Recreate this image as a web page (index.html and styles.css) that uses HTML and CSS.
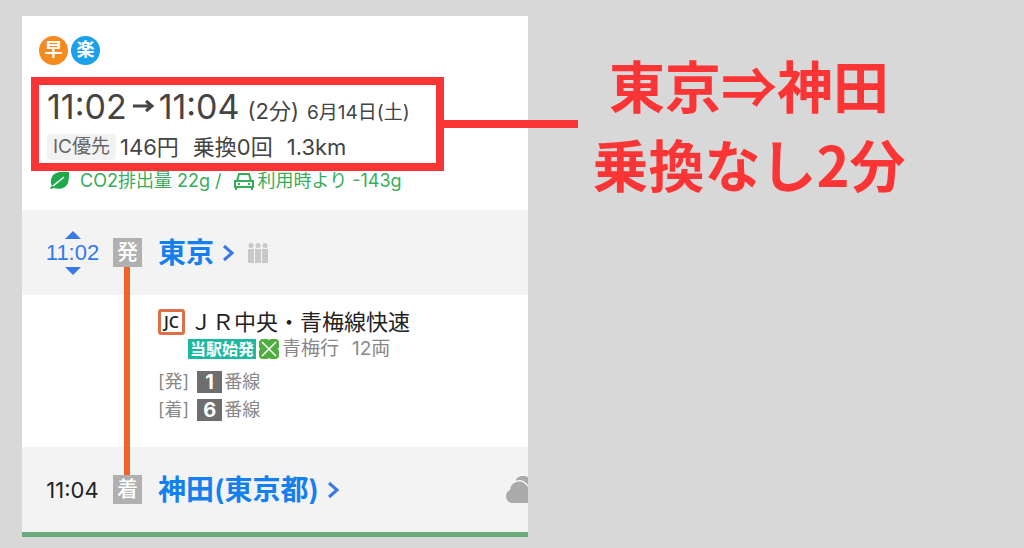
FILE: index.html
```html
<!DOCTYPE html>
<html lang="ja">
<head>
    <meta charset="UTF-8">
    <meta name="viewport" content="width=device-width, initial-scale=1.0">
    <title>東京⇒神田 乗換なし2分</title>
    <link rel="stylesheet" href="styles.css">
</head>
<body>
    <div class="page">
        <main class="route">
            <div class="route-header">
                <div class="badges">
                    <span class="badge badge-fast">早</span>
                    <span class="badge badge-easy">楽</span>
                </div>
                <div class="summary">
                    <div class="summary-time">
                        <span class="time-range">11:02<svg class="arrow" viewBox="0 0 22 16"><path d="M1 8h18M14 3l6 5-6 5"/></svg>11:04</span>
                        <span class="duration">(2分)</span>
                        <span class="date">6月14日(土)</span>
                    </div>
                    <div class="summary-fare">
                        <span class="ic-label">IC優先</span>
                        <span class="fare">146円</span>
                        <span>乗換0回</span>
                        <span>1.3km</span>
                    </div>
                </div>
                <div class="co2">
                    <svg class="leaf" viewBox="0 0 20 18"><path d="M19 0C11-1 4 0 2 5c-2 4-1 7 0 9l-2 2 1 1 3-1c6 2 12 0 14-5 1-3 1-7 1-11z" fill="#21a84c"/><path d="M3 14L14 5" stroke="#fff" stroke-width="1.5"/></svg>
                    <span class="co2-text">CO2排出量 22g /
                        <svg class="car" viewBox="0 0 22 18"><path d="M2 9h18v6H2zM4 9l2-7h10l2 7M3 15v3M19 15v3"/><path d="M5 12h2M15 12h2"/></svg>利用時より -143g</span>
                </div>
            </div>

            <div class="station">
                <div class="station-time station-time-link">
                    <span class="tri-up"></span>
                    <span>11:02</span>
                    <span class="tri-down"></span>
                </div>
                <span class="mark">発</span>
                <a class="station-name" href="#">東京<svg class="chevron" viewBox="0 0 12 18"><path d="M2 2l8 7-8 7"/></svg></a>
                <svg class="people" viewBox="0 0 20 20">
                    <circle cx="3" cy="2.5" r="2.5"/><circle cx="10" cy="2.5" r="2.5"/><circle cx="17" cy="2.5" r="2.5"/>
                    <path d="M0 6h6v14H0zM7 6h6v14H7zM14 6h6v14h-6z"/>
                </svg>
            </div>

            <div class="leg">
                <div class="line-name">
                    <span class="line-code">JC</span>
                    <span>ＪＲ中央・青梅線快速</span>
                </div>
                <div class="train">
                    <span class="start-tag">当駅始発</span>
                    <svg class="seat" viewBox="0 0 20 20"><path d="M4 0q3-1 6 1 3-2 6-1 4 0 4 4 1 3-1 6 2 3 1 6 0 4-4 4-3 1-6-1-3 2-6 1-4 0-4-4-1-3 1-6-2-3-1-6 0-4 4-4z" fill="#4fae3f"/><path d="M3 3l14 14M17 3L3 17" stroke="#fff" stroke-width="1.5"/></svg>
                    <span class="bound">青梅行</span>
                    <span>12両</span>
                </div>
                <div class="platform"><span>[発]</span><span class="number">1</span><span>番線</span></div>
                <div class="platform"><span>[着]</span><span class="number">6</span><span>番線</span></div>
            </div>

            <div class="station">
                <div class="station-time">11:04</div>
                <span class="mark">着</span>
                <a class="station-name" href="#">神田(東京都)<svg class="chevron" viewBox="0 0 12 18"><path d="M2 2l8 7-8 7"/></svg></a>
                <svg class="cloud" viewBox="0 0 36 28"><path d="M11 7a8 8 0 0 1 15-3c5 0 8 4 8 9l-8 2z"/><path class="cloud-front" d="M7 27a7 7 0 0 1-1-13 9 9 0 0 1 16-5c2 1 2 3 3 4 5-1 8 2 8 7s-3 7-6 7z"/></svg>
            </div>
        </main>

        <h1 class="callout">東京⇒神田<br>乗換なし2分</h1>
    </div>
</body>
</html>
```
FILE: styles.css
```css
body {
    background-color: #d8d8d8;
    color: #444;
    font-family: Inter, "Noto Sans CJK JP", sans-serif;
    margin: 0;
}
.page {
    display: grid;
    grid-template-columns: 506fr 474fr;
    align-items: start;
    padding: 16px 22px 0;
}
.route {
    background-color: #fff;
    border-bottom: 5px solid #6dab7d;
}
.route-header {
    padding: 20px 9px 18px;
}
.badges {
    display: flex;
    gap: 3px;
    padding-left: 8px;
}
.badge {
    width: 29px;
    height: 29px;
    border-radius: 50%;
    color: #fff;
    font-size: 18px;
    font-weight: 700;
    line-height: 28px;
    text-align: center;
}
.badge-fast {
    background-color: #f58a1f;
}
.badge-easy {
    background-color: #1ba1ec;
}

/* highlighted summary with the line that leads to the callout */
.summary {
    position: relative;
    margin: 12px 75px 0 0;
    border: 8px solid #f93434;
}
.summary::after {
    content: "";
    position: absolute;
    left: 100%;
    top: 35px;
    width: 142px;
    height: 8px;
    background-color: #f93434;
}
.summary-time {
    display: flex;
    align-items: baseline;
    gap: 8px;
    height: 46px;
    padding-left: 8px;
    line-height: 44px;
    white-space: nowrap;
}
.time-range {
    font-size: 34px;
}
.arrow {
    width: 22px;
    height: 16px;
    margin: 0 5px;
    fill: none;
    stroke: #444;
    stroke-width: 3;
    vertical-align: 5px;
}
.duration {
    font-size: 22px;
}
.date {
    font-size: 19px;
}
.summary-fare {
    display: flex;
    align-items: center;
    gap: 14px;
    height: 32px;
    padding-left: 8px;
    font-size: 22px;
    line-height: 28px;
    white-space: nowrap;
}
.ic-label {
    padding: 0 6px;
    border-radius: 4px;
    background-color: #f2f2f2;
    color: #666;
    font-size: 19px;
    line-height: 26px;
}
.fare {
    margin-left: -10px;
}
.co2 {
    display: flex;
    align-items: center;
    gap: 10px;
    height: 22px;
    margin-top: -1px;
    padding-left: 19px;
    color: #35ad5a;
    font-size: 18px;
    line-height: 22px;
    white-space: nowrap;
}
.leaf {
    width: 20px;
    height: 18px;
}
.car {
    width: 22px;
    height: 18px;
    margin: 0 3px 0 6px;
    fill: none;
    stroke: #35ad5a;
    stroke-width: 2;
    vertical-align: -3px;
}

.station {
    display: flex;
    align-items: center;
    height: 85px;
    padding-left: 22px;
    background-color: #f3f3f3;
    overflow: hidden;
}
.station-time {
    display: flex;
    flex-direction: column;
    align-items: center;
    width: 57px;
    margin-right: 12px;
    color: #222;
    font-size: 22px;
    line-height: 28px;
}
.station-time-link {
    color: #2f7be8;
    font-family: "Liberation Sans", sans-serif;
}
.tri-up, .tri-down {
    border-left: 8px solid transparent;
    border-right: 8px solid transparent;
}
.tri-up {
    border-bottom: 8px solid #3b78e7;
}
.tri-down {
    border-top: 8px solid #3b78e7;
}
.mark {
    width: 29px;
    height: 29px;
    background-color: #b0b0b0;
    color: #fff;
    font-size: 21px;
    font-weight: 500;
    line-height: 28px;
    text-align: center;
}
.station-name {
    display: flex;
    align-items: center;
    gap: 8px;
    margin-left: 16px;
    color: #147fee;
    font-size: 28px;
    font-weight: 600;
    line-height: 40px;
    text-decoration: none;
    white-space: nowrap;
}
.chevron {
    width: 12px;
    height: 18px;
    fill: none;
    stroke: #3b78e7;
    stroke-width: 3;
}
.people {
    width: 20px;
    height: 20px;
    margin-left: 14px;
    fill: #c8c8c8;
}
.cloud {
    flex: none;
    width: 36px;
    height: 28px;
    margin: 0 -12px 0 auto;
    fill: #ababab;
}
.cloud-front {
    stroke: #f3f3f3;
    stroke-width: 3;
    paint-order: stroke;
}

.leg {
    position: relative;
    height: 139px;
    padding: 13px 0 0 136px;
    color: #888;
    font-size: 18px;
    white-space: nowrap;
}
/* line between the two station marks */
.leg::before {
    content: "";
    position: absolute;
    left: 102px;
    top: -28px;
    bottom: -28px;
    width: 6px;
    background-color: #f2622c;
}
.line-name {
    display: flex;
    align-items: center;
    gap: 5px;
    color: #222;
    font-size: 22px;
    line-height: 28px;
}
.line-code {
    width: 21px;
    border: 3px solid #dc7148;
    border-radius: 3px;
    font-family: "Open Sans", sans-serif;
    font-size: 16px;
    font-weight: 600;
    line-height: 20px;
    text-align: center;
}
.train {
    display: flex;
    align-items: center;
    gap: 3px;
    height: 26px;
    padding-left: 30px;
    font-size: 19px;
    line-height: 26px;
}
.start-tag {
    padding: 0 2px;
    background-color: #1cb9a0;
    color: #fff;
    font-size: 16px;
    font-weight: 700;
    line-height: 20px;
}
.seat {
    width: 20px;
    height: 20px;
}
.bound {
    margin-right: 10px;
}
.platform {
    display: flex;
    align-items: center;
    height: 28px;
    line-height: 28px;
}
.train + .platform {
    margin-top: 6px;
}
.number {
    width: 25px;
    margin: 0 2px 0 8px;
    background-color: #6e6e6e;
    color: #fff;
    font-size: 20px;
    font-weight: 700;
    line-height: 22px;
    text-align: center;
}

.callout {
    margin: 28px 0 0;
    padding-right: 32px;
    color: #fb3535;
    font-family: "Noto Sans CJK JP", sans-serif;
    font-size: 56px;
    font-weight: 700;
    line-height: 79px;
    text-align: center;
    white-space: nowrap;
}
```
